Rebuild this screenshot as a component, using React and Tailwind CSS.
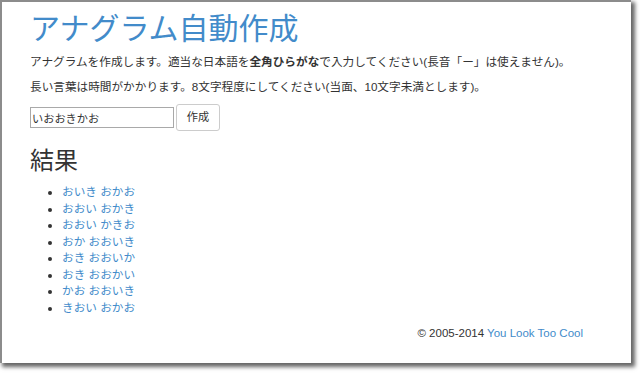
import React from "react";

const results = [
  "おいき おかお",
  "おおい おかき",
  "おおい かきお",
  "おか おおいき",
  "おき おおいか",
  "おき おおかい",
  "かお おおいき",
  "きおい おかお",
];

export default function App() {
  return (
    <div className="w-[640px] h-[373px] bg-white overflow-hidden">
      <div
        className="w-[631px] h-[363px] bg-white border-l-2 border-t-2 border-[#8c8c8c] shadow-[3px_3px_4px_1px_rgba(0,0,0,0.6)] pl-[28px] pt-[10px] text-[#333333]"
        style={{ fontFamily: '"Liberation Sans", "Noto Sans CJK JP", sans-serif' }}
      >
        <h1 className="text-[30px] leading-[33px] text-[#428bca] m-0">アナグラム自動作成</h1>
        <p className="mt-[9px] text-[11.65px] leading-[16px]">
          アナグラムを作成します。適当な日本語を<b>全角ひらがな</b>で入力してください(長音「ー」は使えません)。
        </p>
        <p className="mt-[9px] text-[11.65px] leading-[16px]">
          長い言葉は時間がかかります。8文字程度にしてください(当面、10文字未満とします)。
        </p>
        <div className="mt-[9px] flex items-center gap-[2px] h-[27px]">
          <input
            defaultValue="いおおきかお"
            className="w-[144px] h-[21px] border border-[#a9a9a9] px-[1px] text-[11.2px] text-[#333] outline-none"
          />
          <button className="h-[27px] w-[44px] border border-[#cccccc] rounded-[3px] bg-white text-[11.2px] text-[#333]">
            作成
          </button>
        </div>
        <h2 className="mt-[17px] text-[24px] leading-[26px] font-normal">結果</h2>
        <ul className="mt-[10px] list-disc pl-[32px] text-[11.65px] leading-[16.5px]">
          {results.map((r) => (
            <li key={r}>
              <a className="text-[#428bca]">{r}</a>
            </li>
          ))}
        </ul>
        <div className="mt-[9px] flex justify-end pr-[48px] text-[11.5px] leading-[16px]">
          <span>
            © 2005-2014 <a className="text-[#428bca]">You Look Too Cool</a>
          </span>
        </div>
      </div>
    </div>
  );
}
